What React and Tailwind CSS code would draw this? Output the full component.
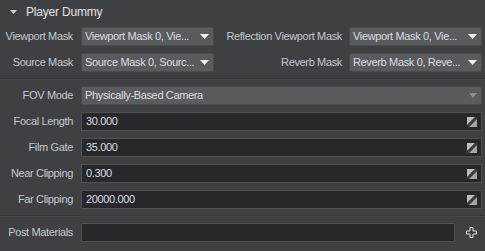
import React from 'react';

const font = { fontFamily: '"Liberation Sans", Arial, sans-serif' };

function Arrow({ dim }) {
  return dim ? (
    <svg width="8" height="5" viewBox="0 0 8 5" className="shrink-0">
      <path d="M0 0H8L4 5Z" fill="#8c8d90" />
    </svg>
  ) : (
    <svg width="9" height="5" viewBox="0 0 9 5" className="shrink-0">
      <path d="M0 0H9L4.5 5Z" fill="#f0f0f0" />
    </svg>
  );
}

function Dropdown({ text, dim, className = '' }) {
  return (
    <div
      className={`h-[19px] flex items-center justify-between pl-[3px] pr-[4px] rounded-[2px] bg-[#5a5b5f] border border-[#4a4b4f] text-[#dcdde0] ${className}`}
    >
      <span className="truncate">{text}</span>
      <Arrow dim={dim} />
    </div>
  );
}

function DragIcon() {
  return (
    <svg width="10" height="10" viewBox="0 0 10 10" className="shrink-0">
      <rect x="0" y="0" width="10" height="10" fill="#6d6e72" />
      <path d="M0 0H8L0 8Z" fill="#bcbdc0" />
      <path d="M10 2V10H2Z" fill="#a3a4a7" />
      <path d="M0 8L8 0H10V2L2 10H0Z" fill="#3a3b3e" />
    </svg>
  );
}

function NumberField({ value }) {
  return (
    <div className="flex-1 h-[19px] flex items-center justify-between pl-[4px] pr-[4px] bg-[#27282b] border border-[#505155] text-[#d9dde3]">
      <span>{value}</span>
      <DragIcon />
    </div>
  );
}

function Label({ children, className = '' }) {
  return <div className={`text-right text-[#c3c9cf] whitespace-nowrap ${className}`}>{children}</div>;
}

function Separator() {
  return (
    <div className="my-[6px]">
      <div className="h-px bg-[#35363a]" />
      <div className="h-px bg-[#46474b]" />
    </div>
  );
}

export default function App() {
  const numbers = [
    ['Focal Length', '30.000'],
    ['Film Gate', '35.000'],
    ['Near Clipping', '0.300'],
    ['Far Clipping', '20000.000'],
  ];

  return (
    <div
      className="w-[485px] h-[251px] bg-[#3f4044] text-[11px] tracking-[-0.35px] leading-none overflow-hidden"
      style={font}
    >
      {/* Header */}
      <div className="h-[24px] flex items-center pl-[10px]">
        <svg width="7" height="4" viewBox="0 0 7 4">
          <path d="M0 0H7L3.5 4Z" fill="#d0d0d0" />
        </svg>
        <span className="ml-[9px] text-[12px] text-[#e2e3e5] tracking-[-0.2px]">Player Dummy</span>
      </div>

      {/* Masks */}
      <div className="mt-[3px] flex flex-col gap-[7px] pl-[5px] pr-[3px]">
        <div className="flex items-center">
          <Label className="w-[68px]">Viewport Mask</Label>
          <Dropdown text="Viewport Mask 0, Vie..." className="ml-[8px] w-[133px]" />
          <Label className="flex-1">Reflection Viewport Mask</Label>
          <Dropdown text="Viewport Mask 0, Vie..." className="ml-[7px] w-[133px]" />
        </div>
        <div className="flex items-center">
          <Label className="w-[68px]">Source Mask</Label>
          <Dropdown text="Source Mask 0, Sourc..." className="ml-[8px] w-[133px]" />
          <Label className="flex-1">Reverb Mask</Label>
          <Dropdown text="Reverb Mask 0, Reve..." className="ml-[7px] w-[133px]" />
        </div>
      </div>

      <Separator />

      {/* Camera */}
      <div className="flex flex-col gap-[7px] pl-[5px] pr-[3px]">
        <div className="flex items-center">
          <Label className="w-[68px]">FOV Mode</Label>
          <Dropdown text="Physically-Based Camera" dim className="ml-[8px] flex-1" />
        </div>
        {numbers.map(([label, value]) => (
          <div key={label} className="flex items-center">
            <Label className="w-[68px] mr-[8px]">{label}</Label>
            <NumberField value={value} />
          </div>
        ))}
      </div>

      <Separator />

      {/* Post materials */}
      <div className="flex items-center pl-[5px] pr-[3px]">
        <Label className="w-[68px] mr-[8px]">Post Materials</Label>
        <div className="w-[374px] h-[19px] bg-[#27282b] border border-[#505155]" />
        <div className="flex-1 flex pl-[11px]">
          <svg width="11" height="11" viewBox="0 0 11 11">
            <path
              d="M4 0.5H7V4H10.5V7H7V10.5H4V7H0.5V4H4Z"
              fill="#3a3b3e"
              stroke="#e4e4e4"
              strokeWidth="1"
            />
          </svg>
        </div>
      </div>
    </div>
  );
}
